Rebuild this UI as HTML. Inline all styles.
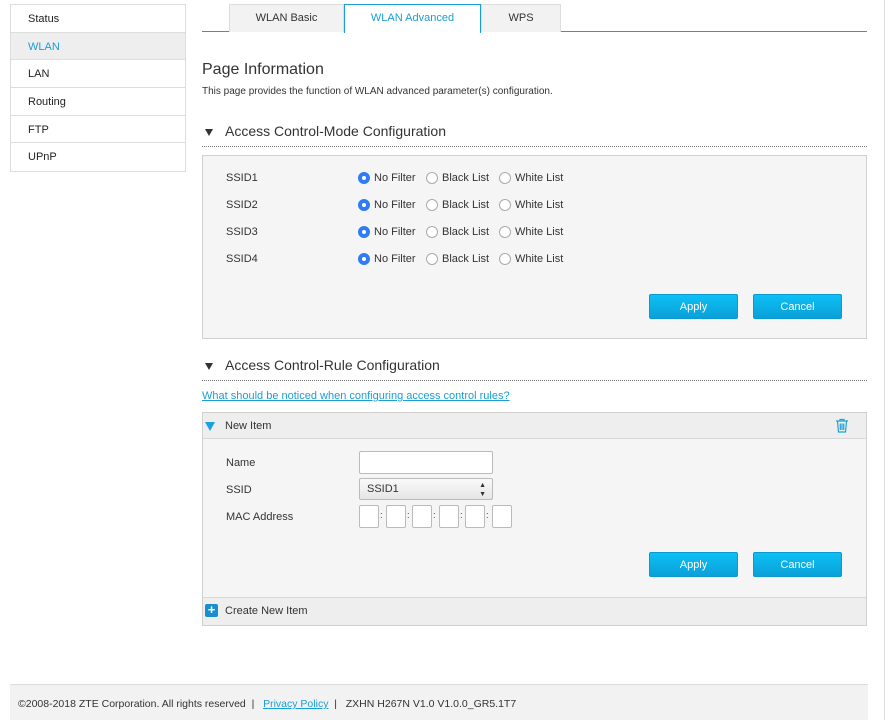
<!DOCTYPE html>
<html><head><meta charset="utf-8"><style>
*{box-sizing:border-box;margin:0;padding:0}
body{width:889px;height:720px;position:relative;background:#fff;font-family:"Liberation Sans",Arial,sans-serif;font-size:11px;color:#333;overflow:hidden}
.a{position:absolute}
.nav{left:10px;top:4px;width:176px;border:1px solid #ddd}
.nav div{height:27.7px;line-height:28px;padding-left:17px;border-bottom:1px solid #ddd;font-size:11px;color:#222}
.nav div:last-child{border-bottom:0}
.nav .on{background:#eee;color:#1a9ed6}
.tab{top:4px;height:28px;line-height:27px;text-align:center;background:#f2f2f2;border:1px solid #ddd;border-bottom:0;font-size:11px;color:#333}
.box{background:#f5f5f5;border:1px solid #d0d0d0}
.lbl{font-size:11px;color:#333}
.r{position:absolute;width:12px;height:12px;border-radius:50%;border:1px solid #aaa;background:#fff}
.r.on{background:#2f7cf6;border-color:#2f7cf6}
.r.on:after{content:"";position:absolute;left:3px;top:3px;width:4px;height:4px;border-radius:50%;background:#fff}
.btn{position:absolute;width:89px;height:25px;line-height:25px;text-align:center;color:#fff;font-size:11px;background:linear-gradient(#0cc0f5,#0aa0d8);border-radius:2px;border:1px solid #0a9ad0}
.hd{font-size:14px;color:#333}
.tri{width:0;height:0;border-left:4.5px solid transparent;border-right:4.5px solid transparent;border-top:7px solid #333}
.dot{height:0;border-top:1px dotted #777}
.in{position:absolute;background:#fff;border:1px solid #bbb;border-radius:2px}
</style></head><body>
<div class="a nav"><div>Status</div><div class="on">WLAN</div><div>LAN</div><div>Routing</div><div>FTP</div><div>UPnP</div></div>

<div class="a" style="left:202px;top:31px;width:665px;border-top:1px solid #1a9ed6"></div>
<div class="a tab" style="left:229px;width:115px">WLAN Basic</div>
<div class="a tab" style="left:344px;width:137px;background:#fff;border:1px solid #1a9ed6;border-bottom:0;height:29px;color:#1a9ed6">WLAN Advanced</div>
<div class="a tab" style="left:481px;width:80px">WPS</div>

<div class="a" style="left:202px;top:61px;font-size:16px;color:#333">Page Information</div>
<div class="a" style="left:202px;top:86px;font-size:10px;color:#333">This page provides the function of WLAN advanced parameter(s) configuration.</div>

<div class="a tri" style="left:205px;top:129px"></div>
<div class="a hd" style="left:225px;top:123px">Access Control-Mode Configuration</div>
<div class="a dot" style="left:202px;top:146px;width:665px"></div>

<div class="a box" style="left:202px;top:155px;width:665px;height:184px"></div>
<div class="a lbl" style="left:226px;top:172px">SSID1</div>
<div class="a lbl" style="left:226px;top:199px">SSID2</div>
<div class="a lbl" style="left:226px;top:226px">SSID3</div>
<div class="a lbl" style="left:226px;top:253px">SSID4</div>
<div class="a" style="left:358px;top:172px;width:230px;height:110px">
<div class="r on" style="left:0;top:0"></div><span class="a lbl" style="left:16px;top:0">No Filter</span>
<div class="r" style="left:68px;top:0"></div><span class="a lbl" style="left:84px;top:0">Black List</span>
<div class="r" style="left:141px;top:0"></div><span class="a lbl" style="left:157px;top:0">White List</span>
<div class="r on" style="left:0;top:27px"></div><span class="a lbl" style="left:16px;top:27px">No Filter</span>
<div class="r" style="left:68px;top:27px"></div><span class="a lbl" style="left:84px;top:27px">Black List</span>
<div class="r" style="left:141px;top:27px"></div><span class="a lbl" style="left:157px;top:27px">White List</span>
<div class="r on" style="left:0;top:54px"></div><span class="a lbl" style="left:16px;top:54px">No Filter</span>
<div class="r" style="left:68px;top:54px"></div><span class="a lbl" style="left:84px;top:54px">Black List</span>
<div class="r" style="left:141px;top:54px"></div><span class="a lbl" style="left:157px;top:54px">White List</span>
<div class="r on" style="left:0;top:81px"></div><span class="a lbl" style="left:16px;top:81px">No Filter</span>
<div class="r" style="left:68px;top:81px"></div><span class="a lbl" style="left:84px;top:81px">Black List</span>
<div class="r" style="left:141px;top:81px"></div><span class="a lbl" style="left:157px;top:81px">White List</span>
</div>
<div class="btn" style="left:649px;top:294px">Apply</div>
<div class="btn" style="left:753px;top:294px">Cancel</div>

<div class="a tri" style="left:205px;top:363px"></div>
<div class="a hd" style="left:225px;top:357px">Access Control-Rule Configuration</div>
<div class="a dot" style="left:202px;top:380px;width:665px"></div>
<div class="a" style="left:202px;top:390px;font-size:11px;color:#1a9ed6;text-decoration:underline">What should be noticed when configuring access control rules?</div>

<div class="a box" style="left:202px;top:412px;width:665px;height:214px"></div>
<div class="a" style="left:203px;top:413px;width:663px;height:26px;background:#eee;border-bottom:1px solid #d8d8d8"></div>
<div class="a" style="left:205px;top:422px;width:0;height:0;border-left:5px solid transparent;border-right:5px solid transparent;border-top:9px solid #1aa3dc"></div>
<div class="a lbl" style="left:225px;top:420px">New Item</div>
<svg class="a" style="left:835px;top:418px" width="14" height="15" viewBox="0 0 14 15"><g fill="none" stroke="#1aa3dc" stroke-width="1.2"><path d="M1 3h12M5 3V1.5h4V3M2.5 3.5l1 10.5h7l1-10.5M5.3 5.5v6.5M7 5.5v6.5M8.7 5.5v6.5"/></g></svg>

<div class="a lbl" style="left:226px;top:457px">Name</div>
<div class="a lbl" style="left:226px;top:484px">SSID</div>
<div class="a lbl" style="left:226px;top:511px">MAC Address</div>
<div class="in" style="left:359px;top:451px;width:134px;height:23px"></div>
<div class="in" style="left:359px;top:478px;width:134px;height:22px;background:linear-gradient(#fafafa,#e6e6e6);padding-left:7px;line-height:20px;font-size:11px">SSID1<span style="position:absolute;right:6px;font-size:7px;line-height:9px;top:2px">▲<br>▼</span></div>
<div class="in" style="left:359px;top:505px;width:20px;height:23px"></div>
<div class="in" style="left:386px;top:505px;width:20px;height:23px"></div>
<div class="in" style="left:412px;top:505px;width:20px;height:23px"></div>
<div class="in" style="left:439px;top:505px;width:20px;height:23px"></div>
<div class="in" style="left:465px;top:505px;width:20px;height:23px"></div>
<div class="in" style="left:492px;top:505px;width:20px;height:23px"></div>
<div class="a" style="left:380px;top:510px;font-size:9px">:</div>
<div class="a" style="left:407px;top:510px;font-size:9px">:</div>
<div class="a" style="left:433px;top:510px;font-size:9px">:</div>
<div class="a" style="left:460px;top:510px;font-size:9px">:</div>
<div class="a" style="left:486px;top:510px;font-size:9px">:</div>
<div class="btn" style="left:649px;top:552px">Apply</div>
<div class="btn" style="left:753px;top:552px">Cancel</div>

<div class="a" style="left:203px;top:597px;width:663px;height:28px;background:#eee;border-top:1px solid #d8d8d8"></div>
<div class="a" style="left:205px;top:604px;width:13px;height:13px;background:#1a8fd0;border-radius:2px;color:#fff;font-size:13px;line-height:12px;text-align:center;font-weight:bold">+</div>
<div class="a lbl" style="left:225px;top:605px">Create New Item</div>

<div class="a" style="left:10px;top:684px;width:858px;height:36px;background:#f2f2f2;border-top:1px solid #ddd"></div>
<div class="a" style="left:18px;top:698px;font-size:10.5px;color:#333">©2008-2018 ZTE Corporation. All rights reserved&nbsp; |&nbsp;&nbsp; <span style="color:#1a9ed6;text-decoration:underline">Privacy Policy</span>&nbsp; |&nbsp;&nbsp; ZXHN H267N V1.0 V1.0.0_GR5.1T7</div>
<div class="a" style="left:884px;top:0;width:1px;height:720px;background:#ddd"></div>
</body></html>
